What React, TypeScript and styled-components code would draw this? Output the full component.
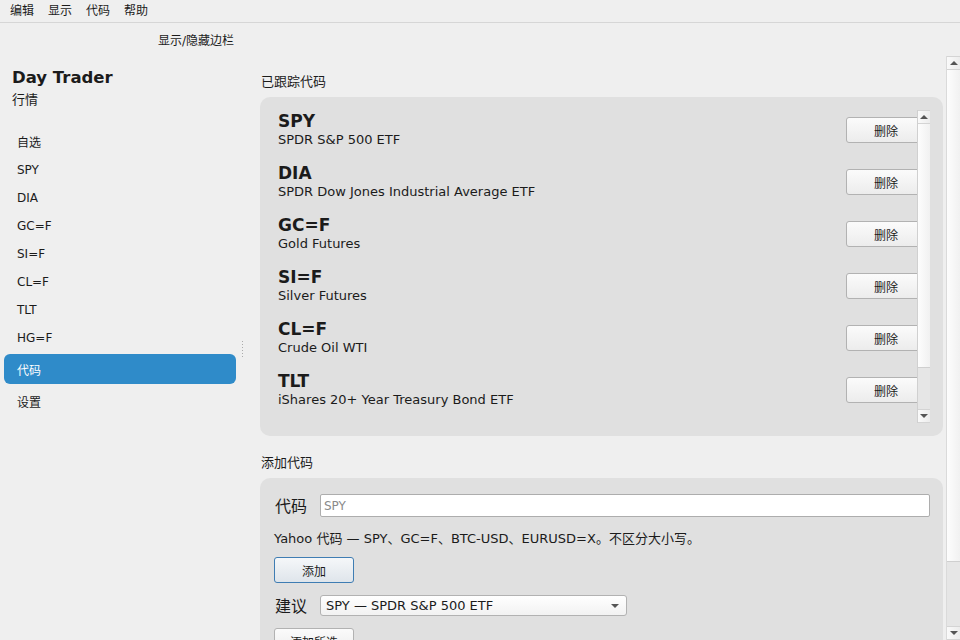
import React from "react"
import styled, {createGlobalStyle} from "styled-components";

const GlobalStyle = createGlobalStyle`
    html, body {
        margin: 0;
        padding: 0;
        background-color: #efefef;
    }
    body {
        font-family: "DejaVu Sans", "Noto Sans CJK SC", sans-serif;
        color: #1b1b1b;
    }
`

const Window = styled.div`
    width: 960px;
    height: 640px;
    overflow: hidden;
    display: flex;
    flex-direction: column;
    background-color: #efefef;
`

const MenuBar = styled.div`
    height: 22px;
    display: flex;
    align-items: center;
    gap: 14px;
    padding-left: 10px;
    border-bottom: 1px solid #d6d6d6;
    font-size: 12px;
`

const MenuItem = styled.span`
    line-height: 22px;
`

const ToolBar = styled.div`
    height: 33px;
    display: flex;
    align-items: center;
    padding-left: 158px;
    font-size: 12px;
`

const Body = styled.div`
    flex: 1;
    display: flex;
    min-height: 0;
`

const Sidebar = styled.div`
    width: 240px;
    padding: 12px 4px 0 4px;
    box-sizing: border-box;
    display: flex;
    flex-direction: column;
`

const AppTitle = styled.div`
    font-weight: bold;
    font-size: 16.5px;
    line-height: 20px;
    padding-left: 8px;
`

const AppSubtitle = styled.div`
    font-size: 13px;
    line-height: 18px;
    margin-top: 3px;
    margin-bottom: 17px;
    padding-left: 8px;
`

// rows holding CJK text come out a little taller than the latin ones
const NavItem = styled.div<{ $active?: boolean, $tall?: boolean }>`
    height: ${p => p.$tall ? 30 : 28}px;
    flex-shrink: 0;
    margin: ${p => p.$active ? "2px 0" : "0"};
    display: flex;
    align-items: center;
    padding-left: 13px;
    font-size: 12px;
    border-radius: 6px;
    background-color: ${p => p.$active ? "#2f8bc9" : "transparent"};
    color: ${p => p.$active ? "#ffffff" : "#1b1b1b"};
`

const Splitter = styled.div`
    width: 8px;
    display: flex;
    align-items: flex-start;
    padding-top: 285px;
    box-sizing: border-box;
`

const SplitterDots = styled.div`
    margin-left: 2px;
    width: 1px;
    height: 17px;
    background-image: linear-gradient(#aaaaaa 1px, transparent 1px);
    background-size: 1px 3px;
`

const MainScroll = styled.div`
    flex: 1;
    display: flex;
    min-width: 0;
`

const Content = styled.div`
    flex: 1;
    padding: 18px 3px 0 12px;
    overflow: hidden;
`

const SectionTitle = styled.div<{ $gap?: number }>`
    font-size: 13px;
    line-height: 16px;
    margin-top: ${p => p.$gap || 0}px;
    margin-bottom: 7px;
    padding-left: 1px;
`

const Panel = styled.div`
    background-color: #e0e0e0;
    border-radius: 10px;
    display: flex;
    padding: 7px 13px 13px 0;
`

const TickerList = styled.div`
    flex: 1;
    height: 319px;
    overflow: hidden;
`

const TickerRow = styled.div`
    height: 52px;
    display: flex;
    align-items: center;
    justify-content: space-between;
    padding-left: 18px;
`

const TickerText = styled.div`
    display: flex;
    flex-direction: column;
    margin-top: -1px;
`

const TickerSymbol = styled.span`
    font-weight: bold;
    font-size: 17px;
    line-height: 19px;
`

const TickerName = styled.span`
    font-size: 13px;
    line-height: 17px;
`

const Button = styled.button<{ $default?: boolean }>`
    width: 80px;
    height: 26px;
    flex-shrink: 0;
    font-family: inherit;
    font-size: 12px;
    color: #1b1b1b;
    border-radius: 3px;
    border: 1px solid ${p => p.$default ? "#3f7db3" : "#b2b2b2"};
    background: ${p => p.$default
        ? "linear-gradient(#f5f7f9, #dfe5eb)"
        : "linear-gradient(#fbfbfb, #ececec)"};
    padding: 0;
`

const RemoveButton = styled(Button)`
    margin-right: -9px;
`

const PickButton = styled(Button)`
    margin-top: 12px;
`

const FormPanel = styled.div`
    background-color: #e0e0e0;
    border-radius: 10px 10px 0 0;
    padding: 16px 13px 20px 14px;
    display: flex;
    flex-direction: column;
    align-items: flex-start;
`

const FieldRow = styled.div`
    display: flex;
    align-items: center;
    align-self: stretch;
`

const FieldLabel = styled.span`
    width: 46px;
    font-size: 16px;
    line-height: 19px;
    padding: 2px 0 0 1px;
    box-sizing: border-box;
`

const TextInput = styled.div`
    flex: 1;
    height: 23px;
    box-sizing: border-box;
    background-color: #ffffff;
    border: 1px solid #adadad;
    border-radius: 2px;
    display: flex;
    align-items: center;
    padding-left: 3px;
    font-size: 12px;
    color: #8a8a8a;
`

const Hint = styled.div`
    font-size: 13px;
    line-height: 16px;
    margin: 14px 0 10px;
`

const ComboBox = styled.div`
    width: 307px;
    height: 21px;
    box-sizing: border-box;
    border: 1px solid #b2b2b2;
    border-radius: 3px;
    background: linear-gradient(#ffffff, #f2f2f2);
    display: flex;
    align-items: center;
    justify-content: space-between;
    padding: 0 7px 0 5px;
    font-size: 13px;
    color: #1b1b1b;
`

const ArrowDown = styled.span`
    width: 0;
    height: 0;
    border-left: 4px solid transparent;
    border-right: 4px solid transparent;
    border-top: 4px solid #555555;
`

const ArrowUp = styled.span`
    width: 0;
    height: 0;
    border-left: 4px solid transparent;
    border-right: 4px solid transparent;
    border-bottom: 4px solid #555555;
`

const SuggestRow = styled(FieldRow)`
    margin-top: 12px;
`

const ScrollTrack = styled.div<{ $inset?: number }>`
    width: 13px;
    box-sizing: border-box;
    flex-shrink: 0;
    margin-top: ${p => p.$inset || 0}px;
    display: flex;
    flex-direction: column;
    border-left: 1px solid #d0d0d0;
    background-color: #e6e6e6;
`

const ScrollArrow = styled.div`
    height: 14px;
    flex-shrink: 0;
    box-sizing: border-box;
    display: flex;
    align-items: center;
    justify-content: center;
    background: linear-gradient(90deg, #fafafa, #ececec);
    border-top: 1px solid #d4d4d4;
    border-bottom: 1px solid #d4d4d4;
`

const ScrollThumb = styled.div<{ $size: number }>`
    height: ${p => p.$size}px;
    flex-shrink: 0;
    background: linear-gradient(90deg, #fdfdfd, #f1f1f1);
    border-bottom: 1px solid #cfcfcf;
    box-sizing: border-box;
`

const ScrollRest = styled.div`
    flex: 1;
`

const OuterScroll = styled(ScrollTrack)`
    width: 14px;
    border-left: 1px solid #dadada;
`

const ScrollBar: React.FC<{ thumb: number, outer?: boolean, inset?: number }> = ({thumb, outer, inset}) => {
    const Track = outer ? OuterScroll : ScrollTrack
    return (
        <Track $inset={inset}>
            <ScrollArrow><ArrowUp/></ScrollArrow>
            <ScrollThumb $size={thumb}/>
            <ScrollRest/>
            <ScrollArrow><ArrowDown/></ScrollArrow>
        </Track>
    )
}

const menu = ["编辑", "显示", "代码", "帮助"]

const sideItems = ["自选", "SPY", "DIA", "GC=F", "SI=F", "CL=F", "TLT", "HG=F", "代码", "设置"]

const tickers = [
    {symbol: "SPY", name: "SPDR S&P 500 ETF"},
    {symbol: "DIA", name: "SPDR Dow Jones Industrial Average ETF"},
    {symbol: "GC=F", name: "Gold Futures"},
    {symbol: "SI=F", name: "Silver Futures"},
    {symbol: "CL=F", name: "Crude Oil WTI"},
    {symbol: "TLT", name: "iShares 20+ Year Treasury Bond ETF"},
    {symbol: "HG=F", name: "Copper Futures"},
]

const isCjk = (s: string) => /[^\x00-\x7f]/.test(s)

const App: React.FC = () => {
    return (
        <Window>
            <GlobalStyle/>
            <MenuBar>
                {menu.map(m => <MenuItem key={m}>{m}</MenuItem>)}
            </MenuBar>
            <ToolBar>显示/隐藏边栏</ToolBar>
            <Body>
                <Sidebar>
                    <AppTitle>Day Trader</AppTitle>
                    <AppSubtitle>行情</AppSubtitle>
                    {sideItems.map((item, i) =>
                        <NavItem key={item + i} $active={i === 8} $tall={isCjk(item)}>{item}</NavItem>)}
                </Sidebar>
                <Splitter><SplitterDots/></Splitter>
                <MainScroll>
                    <Content>
                        <SectionTitle>已跟踪代码</SectionTitle>
                        <Panel>
                            <TickerList>
                                {tickers.map(t =>
                                    <TickerRow key={t.symbol}>
                                        <TickerText>
                                            <TickerSymbol>{t.symbol}</TickerSymbol>
                                            <TickerName>{t.name}</TickerName>
                                        </TickerText>
                                        <RemoveButton>删除</RemoveButton>
                                    </TickerRow>)}
                            </TickerList>
                            <ScrollBar thumb={244} inset={6}/>
                        </Panel>
                        <SectionTitle $gap={19}>添加代码</SectionTitle>
                        <FormPanel>
                            <FieldRow>
                                <FieldLabel>代码</FieldLabel>
                                <TextInput>SPY</TextInput>
                            </FieldRow>
                            <Hint>Yahoo 代码 — SPY、GC=F、BTC-USD、EURUSD=X。不区分大小写。</Hint>
                            <Button $default>添加</Button>
                            <SuggestRow>
                                <FieldLabel>建议</FieldLabel>
                                <ComboBox>
                                    <span>SPY — SPDR S&amp;P 500 ETF</span>
                                    <ArrowDown/>
                                </ComboBox>
                            </SuggestRow>
                            <PickButton>添加所选</PickButton>
                        </FormPanel>
                    </Content>
                    <ScrollBar thumb={492} outer/>
                </MainScroll>
            </Body>
        </Window>
    )
}

export default App
